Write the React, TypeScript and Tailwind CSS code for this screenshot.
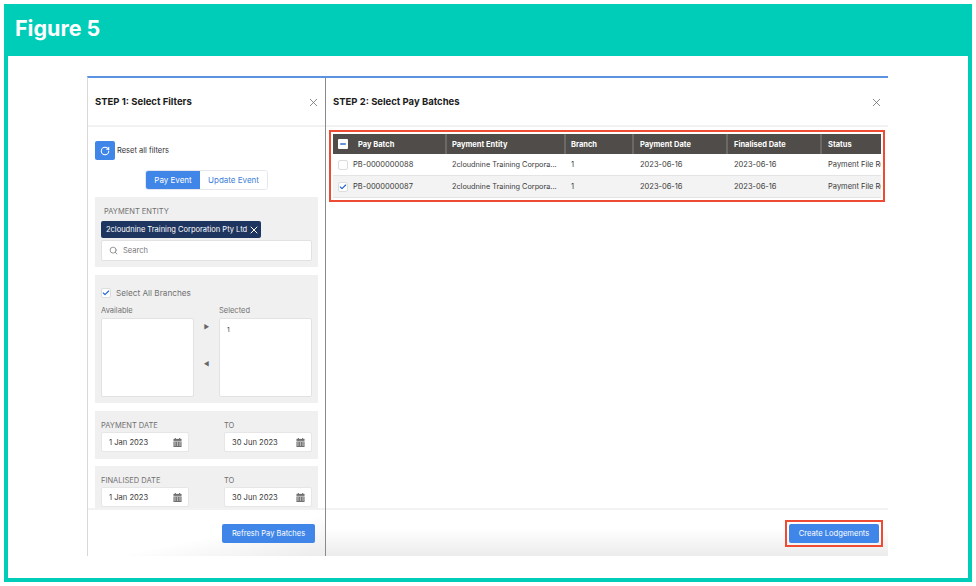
import { Check, Minus, RotateCw, Search, X } from "lucide-react";

const rows = [
  { id: "PB-0000000088", checked: false },
  { id: "PB-0000000087", checked: true },
];

const columns = [
  { label: "Payment Entity", width: "w-[119px] pl-[5px]" },
  { label: "Branch", width: "w-[68px] pl-[5px]" },
  { label: "Payment Date", width: "w-[94px] pl-[6px]" },
  { label: "Finalised Date", width: "w-[94px] pl-[6px]" },
  { label: "Status", width: "w-[59px] pl-[6px]" },
];

function CalendarIcon() {
  return (
    <svg viewBox="0 0 10 10" className="size-[9px] text-[#6f6f6f]" fill="currentColor">
      <rect x="2" y="0" width="1.2" height="2" />
      <rect x="6.8" y="0" width="1.2" height="2" />
      <rect x="0.5" y="1" width="9" height="2.2" />
      <path d="M0.5 4h9v6h-9z M1.5 5v1h1.4V5z M4.3 5v1h1.4V5z M7.1 5v1h1.4V5z M1.5 7.2v1h1.4v-1z M4.3 7.2v1h1.4v-1z M7.1 7.2v1h1.4v-1z" fillRule="evenodd" />
    </svg>
  );
}

function DateField({ value }: { value: string }) {
  return (
    <div className="flex h-[20px] w-[88px] items-center justify-between rounded-[2px] border border-[#e6e6e6] bg-white pl-[7px] pr-[6px] text-[7.6px] text-[#3a3a3a]">
      <span className="pt-[1px]">{value}</span>
      <CalendarIcon />
    </div>
  );
}

function DateBox({ label, from, to, last }: { label: string; from: string; to: string; last?: boolean }) {
  return (
    <div className={`shrink-0 bg-[#f0f0f0] px-[6px] pt-[10px] ${last ? "h-[48px]" : "mb-[7px] h-[48px]"}`}>
      <div className="flex gap-[35px] text-[7.5px] leading-[10px] text-[#707070]">
        <div className="w-[88px]">
          <div className="mb-[1px]">{label}</div>
          <DateField value={from} />
        </div>
        <div className="w-[88px]">
          <div className="mb-[1px]">TO</div>
          <DateField value={to} />
        </div>
      </div>
    </div>
  );
}

function FilterPanel() {
  return (
    <div className="flex h-full w-[238px] shrink-0 flex-col border-r border-[#8a8a8a]">
      <div className="flex h-[49px] shrink-0 items-center justify-between border-b-2 border-[#f2f2f2] pl-[7px] pr-[5px] pt-[2px]">
        <span className="text-[9.5px] font-bold text-[#1c1c1c]">STEP 1: Select Filters</span>
        <X className="size-[13px] text-[#666]" strokeWidth={1.4} />
      </div>

      <div className="min-h-0 flex-1 overflow-hidden px-[7px] pt-[14px]">
        <div className="flex items-center gap-[2px]">
          <div className="flex h-[19px] w-[20px] items-center justify-center rounded-[2px] bg-[#3f86e8]">
            <RotateCw className="size-[10px] text-white" strokeWidth={2.5} />
          </div>
          <span className="text-[7.5px] text-[#333]">Reset all filters</span>
        </div>

        <div className="mt-[10px] flex justify-center">
          <div className="flex h-[20px] items-center overflow-hidden rounded-[3px] border border-[#e4e8ee] text-[8px]">
            <div className="flex h-full w-[54px] items-center justify-center bg-[#3f86e8] text-white">Pay Event</div>
            <div className="flex h-full w-[67px] items-center justify-center bg-white text-[#3f7fd8]">Update Event</div>
          </div>
        </div>

        <div className="mt-[7px] h-[70px] bg-[#f0f0f0] px-[6px] pt-[10px]">
          <div className="pl-[3px] text-[7.5px] leading-[10px] text-[#707070]">PAYMENT ENTITY</div>
          <div className="mt-[4px] flex h-[17px] w-[160px] items-center rounded-[2px] bg-[#1e3560] pl-[5px] text-[7.5px] text-white">
            <span className="whitespace-nowrap pt-[1px]">2cloudnine Training Corporation Pty Ltd</span>
            <X className="ml-[1px] size-[12px] shrink-0" strokeWidth={2} />
          </div>
          <div className="mt-[2px] flex h-[21px] w-[211px] items-center gap-[5px] rounded-[2px] border border-[#e2e2e2] bg-white pl-[7px] text-[7.5px] text-[#777]">
            <Search className="size-[9px]" strokeWidth={2} />
            <span className="pt-[1px]">Search</span>
          </div>
        </div>

        <div className="mt-[8px] h-[128px] bg-[#f0f0f0] px-[6px] pt-[12px]">
          <div className="flex items-center gap-[5px]">
            <div className="flex size-[10px] items-center justify-center rounded-[2px] border border-[#ddd] bg-white">
              <Check className="size-[8px] text-[#2467d0]" strokeWidth={3.5} />
            </div>
            <span className="text-[8.2px] text-[#707070]">Select All Branches</span>
          </div>
          <div className="mt-[7px] flex text-[7.5px] leading-[10px] text-[#707070]">
            <div className="w-[93px]">
              <div className="mb-[2px]">Available</div>
              <div className="h-[79px] rounded-[2px] border border-[#e2e2e2] bg-white" />
            </div>
            <div className="flex w-[25px] flex-col items-center pt-[16px] text-[6px] text-[#666]">
              <span className="h-[37px]">▶</span>
              <span>◀</span>
            </div>
            <div className="w-[93px]">
              <div className="mb-[2px]">Selected</div>
              <div className="h-[79px] rounded-[2px] border border-[#e2e2e2] bg-white px-[7px] pt-[6px] text-[6.5px] text-[#333]">1</div>
            </div>
          </div>
        </div>

        <div className="mt-[8px]">
          <DateBox label="PAYMENT DATE" from="1 Jan 2023" to="30 Jun 2023" />
          <DateBox label="FINALISED DATE" from="1 Jan 2023" to="30 Jun 2023" last />
        </div>
      </div>

      <div className="flex h-[48px] shrink-0 items-start justify-end border-t-2 border-[#f2f2f2] bg-linear-to-br from-white from-55% to-[#ececec] pr-[10px] pt-[14px]">
        <button className="h-[19px] w-[93px] rounded-[2px] bg-[#3f86e8] text-[7.5px] text-white">Refresh Pay Batches</button>
      </div>
    </div>
  );
}

function BatchTable() {
  return (
    <div className="mx-[3px] mt-[3px] border-2 border-[#ee4b35] p-[2px]">
      <div className="flex h-[20px] bg-[#4f4c49] text-[7.5px] font-bold text-white">
        <div className="flex w-[114px] items-center gap-[10px] border-r-2 border-[#6b6966] pl-[5px]">
          <div className="flex size-[10px] items-center justify-center rounded-[1px] bg-white">
            <Minus className="size-[8px] text-[#2f6fd0]" strokeWidth={4} />
          </div>
          <span className="pt-[1px]">Pay Batch</span>
        </div>
        {columns.map((col, i) => (
          <div
            key={col.label}
            className={`flex items-center pt-[1px] ${col.width} ${i < columns.length - 1 ? "border-r-2 border-[#6b6966]" : ""}`}
          >
            {col.label}
          </div>
        ))}
      </div>
      {rows.map((row) => (
        <div
          key={row.id}
          className={`flex h-[22px] items-center border-b border-[#e4e4e4] pt-[1px] text-[7.5px] text-[#3a3a3a] ${row.checked ? "bg-[#f3f3f3]" : "bg-white"}`}
        >
          <div className="flex w-[114px] items-center gap-[5px] pl-[5px]">
            <div className="flex size-[10px] items-center justify-center rounded-[2px] border border-[#ddd] bg-white">
              {row.checked && <Check className="size-[8px] text-[#2467d0]" strokeWidth={3.5} />}
            </div>
            <span>{row.id}</span>
          </div>
          <div className="w-[119px] whitespace-nowrap pl-[5px] text-[7.3px]">2cloudnine Training Corpora...</div>
          <div className="w-[68px] pl-[5px]">1</div>
          <div className="w-[94px] pl-[6px]">2023-06-16</div>
          <div className="w-[94px] pl-[6px]">2023-06-16</div>
          <div className="w-[59px] overflow-hidden whitespace-nowrap pl-[6px]">Payment File Ready</div>
        </div>
      ))}
    </div>
  );
}

function BatchPanel() {
  return (
    <div className="flex h-full min-w-0 flex-1 flex-col">
      <div className="flex h-[49px] shrink-0 items-center justify-between border-b-2 border-[#f2f2f2] pl-[7px] pr-[5px] pt-[2px]">
        <span className="text-[9.5px] font-bold text-[#1c1c1c]">STEP 2: Select Pay Batches</span>
        <X className="size-[13px] text-[#666]" strokeWidth={1.4} />
      </div>
      <div className="min-h-0 flex-1">
        <BatchTable />
      </div>
      <div className="flex h-[48px] shrink-0 items-start justify-end border-t-2 border-[#f2f2f2] bg-linear-to-b from-white from-40% to-[#ececec] pr-[5px] pt-[10px]">
        <div className="border-2 border-[#ee4b35] p-[2px]">
          <button className="block h-[19px] w-[90px] rounded-[2px] bg-[#3f86e8] text-[7.6px] text-white">Create Lodgements</button>
        </div>
      </div>
    </div>
  );
}

export default function App() {
  return (
    <div className="h-[586px] w-[976px] bg-white p-[4px] font-['Inter',sans-serif]">
      <div className="flex h-[578px] w-[968px] flex-col bg-[#00cdb8] px-[4px] pb-[4px]">
        <div className="-mx-[4px] flex h-[52px] shrink-0 items-center px-[11px] pb-[4px] text-[21.5px] font-bold text-white">
          <span>Figure 5</span>
        </div>
        <div className="min-h-0 flex-1 bg-white pl-[79px] pt-[20px]">
          <div className="flex h-[480px] w-[801px] border-l border-t-2 border-l-[#d8d8d8] border-t-[#5b93e0]">
            <FilterPanel />
            <BatchPanel />
          </div>
        </div>
      </div>
    </div>
  );
}
